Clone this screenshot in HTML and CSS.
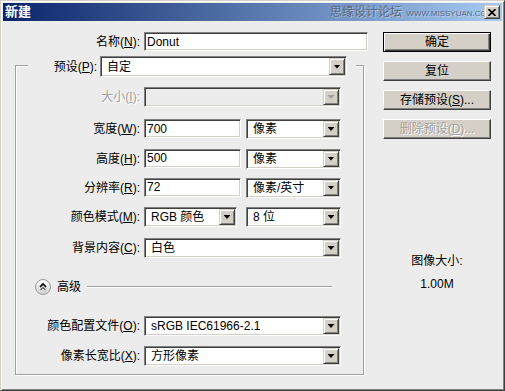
FILE: index.html
```html
<!DOCTYPE html>
<html lang="zh-CN">
<head>
    <meta charset="UTF-8">
    <meta name="viewport" content="width=device-width, initial-scale=1.0">
    <title>新建</title>
    <link rel="stylesheet" href="styles.css">
</head>
<body>
    <div class="window">
        <div class="titlebar">
            <span class="title">新建</span>
            <span class="watermark">思缘设计论坛 <small>WWW.MISSYUAN.COM</small></span>
            <span class="close">
                <svg width="8" height="7" viewBox="0 0 8 7"><path d="M0.5 0 L7.5 7 M7.5 0 L0.5 7" stroke="#000" stroke-width="1.6"/></svg>
            </span>
        </div>
        <div class="content">
            <div class="main">
                <div class="name-row">
                    <label class="lbl">名称(<u>N</u>):</label>
                    <input class="field name" type="text" value="Donut">
                </div>
                <fieldset class="group">
                    <legend class="preset">
                        <label class="lbl">预设(<u>P</u>):</label>
                        <div class="select preset-select"><span>自定</span><i class="drop"></i></div>
                    </legend>
                    <div class="rows">
                        <div class="row off">
                            <label class="lbl">大小(<u>I</u>):</label>
                            <div class="select full off"><span></span><i class="drop"></i></div>
                        </div>
                        <div class="row first-unit">
                            <label class="lbl">宽度(<u>W</u>):</label>
                            <div class="pair">
                                <input class="field num" type="text" value="700">
                                <div class="select unit"><span>像素</span><i class="drop"></i></div>
                            </div>
                        </div>
                        <div class="row short">
                            <label class="lbl">高度(<u>H</u>):</label>
                            <div class="pair">
                                <input class="field num" type="text" value="500">
                                <div class="select unit"><span>像素</span><i class="drop"></i></div>
                            </div>
                        </div>
                        <div class="row short">
                            <label class="lbl">分辨率(<u>R</u>):</label>
                            <div class="pair">
                                <input class="field num" type="text" value="72">
                                <div class="select unit"><span>像素/英寸</span><i class="drop"></i></div>
                            </div>
                        </div>
                        <div class="row">
                            <label class="lbl">颜色模式(<u>M</u>):</label>
                            <div class="pair">
                                <div class="select mode"><span>RGB 颜色</span><i class="drop"></i></div>
                                <div class="select unit"><span>8 位</span><i class="drop"></i></div>
                            </div>
                        </div>
                        <div class="row nudge">
                            <label class="lbl">背景内容(<u>C</u>):</label>
                            <div class="select full"><span>白色</span><i class="drop"></i></div>
                        </div>
                        <div class="advanced">
                            <span class="toggle">
                                <svg width="16" height="16" viewBox="0 0 16 16">
                                    <defs>
                                        <linearGradient id="knob" x1="0" y1="0" x2="0" y2="1">
                                            <stop offset="0" stop-color="#ffffff"/>
                                            <stop offset="1" stop-color="#d0d0d0"/>
                                        </linearGradient>
                                    </defs>
                                    <circle cx="8" cy="8" r="7.5" fill="url(#knob)" stroke="#9a9a9a"/>
                                    <path d="M5 8 L8 5 L11 8" fill="none" stroke="#000" stroke-width="1.6"/>
                                    <path d="M5.5 11 L8 8.5 L10.5 11" fill="none" stroke="#555" stroke-width="1.2"/>
                                </svg>
                            </span>
                            <span class="adv-text">高级</span>
                            <div class="rule"></div>
                        </div>
                        <div class="row gap-top">
                            <label class="lbl">颜色配置文件(<u>O</u>):</label>
                            <div class="select full"><span>sRGB IEC61966-2.1</span><i class="drop"></i></div>
                        </div>
                        <div class="row">
                            <label class="lbl">像素长宽比(<u>X</u>):</label>
                            <div class="select full"><span>方形像素</span><i class="drop"></i></div>
                        </div>
                    </div>
                </fieldset>
            </div>
            <div class="side">
                <button class="btn default">确定</button>
                <button class="btn">复位</button>
                <button class="btn">存储预设(<u>S</u>)...</button>
                <button class="btn" disabled>删除预设(<u>D</u>)...</button>
                <div class="imgsize">
                    <div>图像大小:</div>
                    <div>1.00M</div>
                </div>
            </div>
        </div>
    </div>
</body>
</html>
```

FILE: styles.css
```css
body {
    margin: 0;
    font-family: "Liberation Sans", "Noto Sans CJK SC", sans-serif;
    font-size: 12px;
    line-height: 14px;
    color: #000;
}
.window {
    width: 505px;
    height: 391px;
    box-sizing: border-box;
    padding: 2px;
    background: #ececec;
    border: 1px solid;
    border-color: #d4d0c8 #404040 #404040 #d4d0c8;
    box-shadow: inset 1px 1px #fff, inset -1px -1px #808080;
}

/* title bar */
.titlebar {
    position: relative;
    height: 18px;
    display: flex;
    align-items: center;
    background: linear-gradient(to right, #0a246a, #a6caf0);
}
.title {
    padding-left: 2px;
    color: #fff;
    font-weight: bold;
    font-size: 13px;
}
.watermark {
    position: absolute;
    left: 327px;
    top: 2px;
    color: #5c6a82;
    font-size: 12px;
    white-space: nowrap;
    text-shadow: 1px 1px 0 rgba(255,255,255,.35);
}
.watermark small {
    font-size: 8px;
    margin-left: 1px;
}
.close {
    position: relative;
    margin-left: auto;
    margin-right: 2px;
    width: 16px;
    height: 14px;
    box-sizing: border-box;
    display: flex;
    align-items: center;
    justify-content: center;
    background: #d4d0c8;
    border: 1px solid;
    border-color: #d4d0c8 #404040 #404040 #d4d0c8;
    box-shadow: inset 1px 1px #fff, inset -1px -1px #808080;
}

/* body */
.content {
    display: flex;
    padding-top: 11px;
}
.main {
    margin-left: 12px;
    width: 355px;
}
.lbl {
    flex: none;
    text-align: right;
    white-space: nowrap;
}
.name-row {
    display: flex;
    align-items: center;
    height: 19px;
}
.name-row .lbl {
    width: 125px;
    margin-right: 4px;
}

/* sunken controls */
.field,
.select {
    box-sizing: border-box;
    border: 1px solid;
    border-color: #808080 #fff #fff #808080;
    box-shadow: inset 1px 1px #404040, inset -1px -1px #d4d0c8;
    background: #fff;
    font: inherit;
    padding: 1px;
}
.field {
    height: 19px;
    padding: 0 2px;
    outline: none;
}
.field.name { width: 224px; }
.field.num { width: 97px; }
.select {
    display: flex;
    height: 20px;
}
.select span {
    flex: 1;
    padding-left: 5px;
    display: flex;
    align-items: center;
    white-space: nowrap;
    overflow: hidden;
}
.drop {
    flex: none;
    width: 16px;
    box-sizing: border-box;
    display: flex;
    align-items: center;
    justify-content: center;
    background: #d4d0c8;
    border: 1px solid;
    border-color: #d4d0c8 #404040 #404040 #d4d0c8;
    box-shadow: inset 1px 1px #fff, inset -1px -1px #808080;
}
.drop::after {
    content: "";
    width: 7px;
    height: 4px;
    background: #000;
    clip-path: polygon(0 0, 100% 0, 50% 100%);
}
.select.off { background: #ececec; }
.select.off .drop::after { background: #a0a0a0; }
.select.full { width: 197px; }
.select.unit { width: 95px; }
.select.mode { width: 93px; }
.preset-select {
    width: 247px;
    height: 21px;
    margin-left: 3px;
}

/* group box */
.group {
    margin: 2px 0 0;
    width: 349px;
    box-sizing: border-box;
    padding: 10px 0 8px;
    min-inline-size: 0;
    border: 1px solid #a0a0a0;
    box-shadow: inset 1px 1px #fff, 1px 1px #fff;
}
.preset {
    display: flex;
    align-items: center;
    margin-left: 12px;
    padding: 3px 9px 0 4px;
    background: #ececec;
}
.preset .lbl { width: 65px; }
.rows {
    display: flex;
    flex-direction: column;
    gap: 10px;
}
.row {
    display: flex;
    align-items: center;
    height: 20px;
}
.row .lbl {
    width: 124px;
    margin-right: 4px;
}
.row.short { height: 19px; }
.row.first-unit { margin-top: 2px; }
.row.nudge { margin-top: 1px; }
.row.gap-top { margin-top: 11px; }
.row.off .lbl,
.btn:disabled {
    color: #a0a0a0;
    text-shadow: 1px 1px 0 #fff;
}
.pair {
    width: 197px;
    display: flex;
    justify-content: space-between;
}
.advanced {
    display: flex;
    align-items: center;
    height: 16px;
    margin-top: 11px;
    padding-left: 19px;
}
.toggle {
    display: flex;
    margin-right: 6px;
}
.rule {
    flex: 1 1 auto;
    height: 0;
    margin: 0 31px 0 6px;
    border-top: 1px solid #a0a0a0;
    border-bottom: 1px solid #fff;
}

/* buttons */
.side {
    margin-left: 13px;
    width: 108px;
    display: flex;
    flex-direction: column;
    gap: 9px;
}
.btn {
    height: 20px;
    padding: 0;
    font: inherit;
    color: #000;
    background: #d4d0c8;
    border: 1px solid;
    border-color: #fff #404040 #404040 #fff;
    box-shadow: inset -1px -1px #808080;
}
.btn.default {
    border-color: #000;
    box-shadow: inset 1px 1px #fff, inset -1px -1px #404040, inset -2px -2px #808080;
}
.imgsize {
    margin-top: 106px;
    display: flex;
    flex-direction: column;
    gap: 9px;
    text-align: center;
}
```
